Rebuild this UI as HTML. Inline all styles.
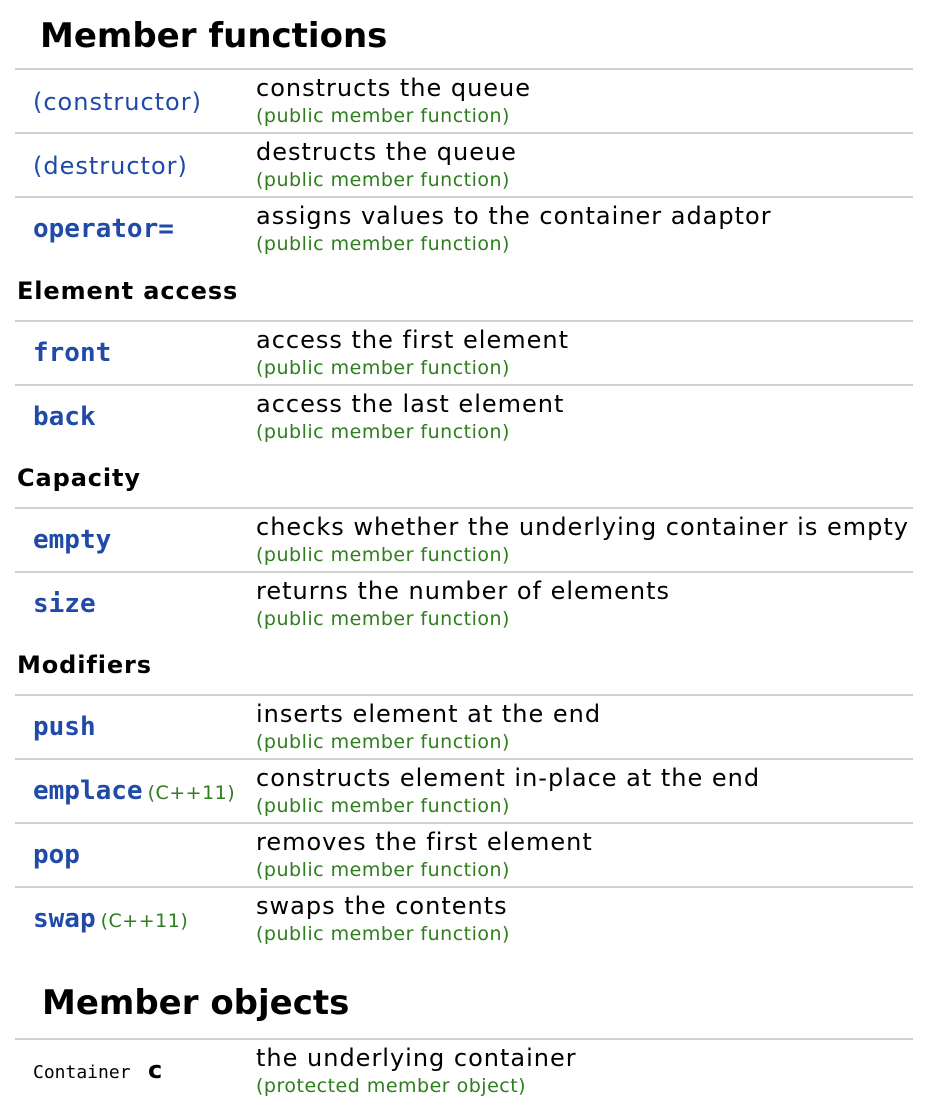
<!DOCTYPE html>
<html><head><meta charset="utf-8"><style>
body{margin:0;width:934px;height:1104px;background:#fff;position:relative;font-family:"DejaVu Sans","Liberation Sans",sans-serif;overflow:hidden}
.a{position:absolute;white-space:nowrap}
.ln{position:absolute;left:15px;width:898px;height:2px;background:#cfcfcf}
.h{font-weight:bold;font-size:34px;line-height:40px;color:#000}
.s{font-weight:bold;font-size:24px;line-height:28px;left:17px;color:#000;letter-spacing:0.9px}
.d{font-size:24px;line-height:28px;left:256px;color:#000;letter-spacing:1px;margin-top:1px}
.g{font-size:19px;line-height:22px;left:256px;color:#2e7d1e;letter-spacing:0.5px;margin-top:2px}
.n{font-size:24px;line-height:28px;left:33px;color:#1f4aa8;letter-spacing:1px}
.c{font-family:"DejaVu Sans Mono","Liberation Mono",monospace;font-weight:bold;font-size:26px;line-height:30px;left:33px;color:#1f4aa8}
.c span{font-family:"DejaVu Sans",sans-serif;font-weight:normal;font-size:19px;letter-spacing:0.5px;color:#2e7d1e;margin-left:5px}
</style></head><body>
<div class="a h" style="left:40px;top:16px">Member functions</div>

<div class="ln" style="top:68px"></div>
<div class="a n" style="top:88px">(constructor)</div>
<div class="a d" style="top:73px">constructs the queue</div>
<div class="a g" style="top:103px">(public member function)</div>

<div class="ln" style="top:132px"></div>
<div class="a n" style="top:152px">(destructor)</div>
<div class="a d" style="top:137px">destructs the queue</div>
<div class="a g" style="top:167px">(public member function)</div>

<div class="ln" style="top:196px"></div>
<div class="a c" style="top:214px">operator=</div>
<div class="a d" style="top:201px">assigns values to the container adaptor</div>
<div class="a g" style="top:231px">(public member function)</div>

<div class="a s" style="top:277px">Element access</div>
<div class="ln" style="top:320px"></div>
<div class="a c" style="top:338px">front</div>
<div class="a d" style="top:325px">access the first element</div>
<div class="a g" style="top:355px">(public member function)</div>
<div class="ln" style="top:384px"></div>
<div class="a c" style="top:402px">back</div>
<div class="a d" style="top:389px">access the last element</div>
<div class="a g" style="top:419px">(public member function)</div>

<div class="a s" style="top:464px">Capacity</div>
<div class="ln" style="top:507px"></div>
<div class="a c" style="top:525px">empty</div>
<div class="a d" style="top:512px">checks whether the underlying container is empty</div>
<div class="a g" style="top:542px">(public member function)</div>
<div class="ln" style="top:571px"></div>
<div class="a c" style="top:589px">size</div>
<div class="a d" style="top:576px">returns the number of elements</div>
<div class="a g" style="top:606px">(public member function)</div>

<div class="a s" style="top:651px">Modifiers</div>
<div class="ln" style="top:694px"></div>
<div class="a c" style="top:712px">push</div>
<div class="a d" style="top:699px">inserts element at the end</div>
<div class="a g" style="top:729px">(public member function)</div>
<div class="ln" style="top:758px"></div>
<div class="a c" style="top:776px">emplace<span>(C++11)</span></div>
<div class="a d" style="top:763px">constructs element in-place at the end</div>
<div class="a g" style="top:793px">(public member function)</div>
<div class="ln" style="top:822px"></div>
<div class="a c" style="top:840px">pop</div>
<div class="a d" style="top:827px">removes the first element</div>
<div class="a g" style="top:857px">(public member function)</div>
<div class="ln" style="top:886px"></div>
<div class="a c" style="top:904px">swap<span>(C++11)</span></div>
<div class="a d" style="top:891px">swaps the contents</div>
<div class="a g" style="top:921px">(public member function)</div>

<div class="a h" style="left:42px;top:983px">Member objects</div>
<div class="ln" style="top:1038px"></div>
<div class="a" style="left:33px;top:1062px;font-family:'DejaVu Sans Mono',monospace;font-size:18px;line-height:22px">Container<b style="font-family:'DejaVu Sans',sans-serif;font-size:24px;position:absolute;left:115px;top:-3px">c</b></div>
<div class="a d" style="top:1043px">the underlying container</div>
<div class="a g" style="top:1073px">(protected member object)</div>
</body></html>
